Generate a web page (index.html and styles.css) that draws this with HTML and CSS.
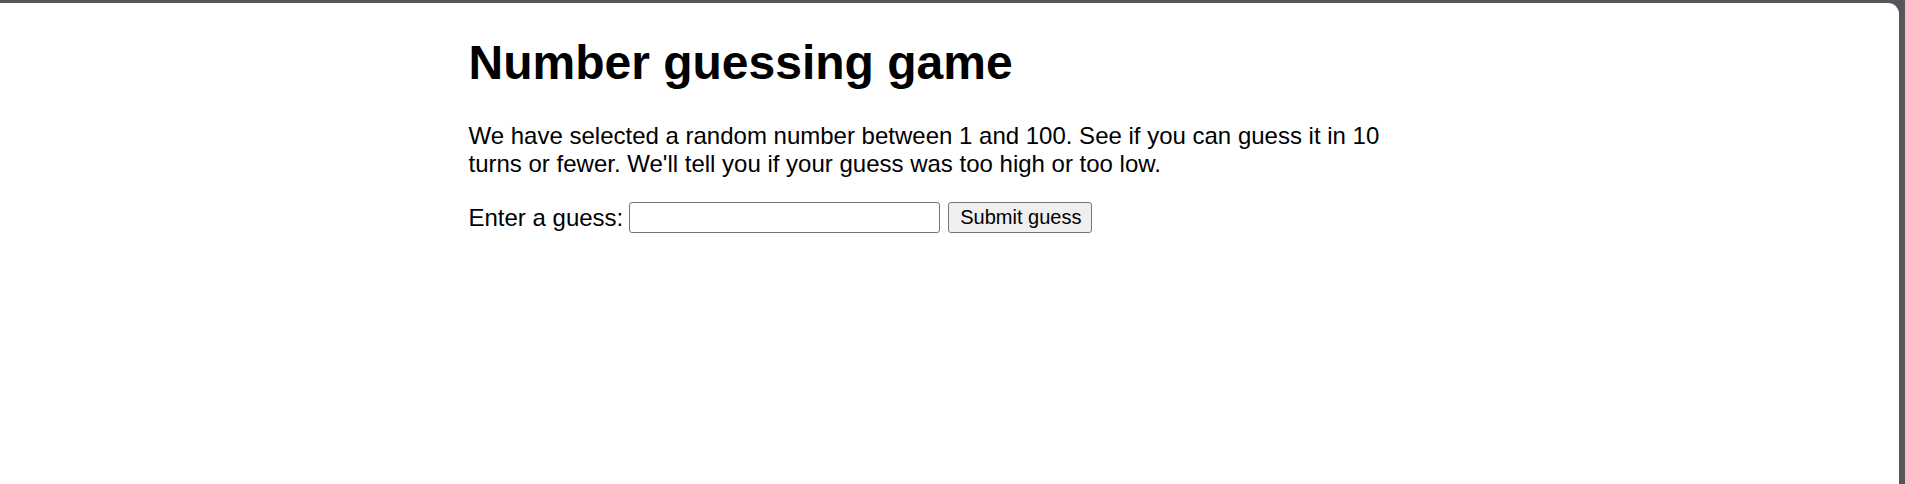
FILE: index.html
```html
<!DOCTYPE html>
<html lang="en">
<head>
<meta charset="utf-8">
<title>Number guessing game</title>
<link rel="stylesheet" href="styles.css">
</head>
<body>
  <main class="page">
    <h1 class="title">Number guessing game</h1>
    <p class="intro">We have selected a random number between 1 and 100. See if you can guess it in 10 turns or fewer. We'll tell you if your guess was too high or too low.</p>
    <div class="form">
      <label class="form-label" for="guessField">Enter a guess:</label>
      <input class="guess-field" type="number" id="guessField" min="1" max="100">
      <button class="guess-submit" type="button">Submit guess</button>
    </div>
  </main>
</body>
</html>
```

FILE: styles.css
```css
html {
  background: #55555c;
  padding: 3px 6px 0 0;
  height: 484px;
  box-sizing: border-box;
  overflow: hidden;
}

body {
  margin: 0;
  background: #ffffff;
  border-top-right-radius: 11px;
  min-height: 481px;
  display: flow-root;
  font-family: "Liberation Sans", Arial, sans-serif;
  color: #000;
}

.page {
  max-width: 962px;
  margin: 0 auto;
}

.title {
  font-size: 48px;
  font-weight: bold;
  margin: 32px 0;
  line-height: 55px;
}

.intro {
  font-size: 24px;
  line-height: 27.5px;
  margin: 0 0 24px;
}

.form {
  display: flex;
  align-items: center;
  font-size: 24px;
  margin-top: 25px;
}

.form-label {
  margin-right: 6px;
  line-height: 28px;
}

.guess-field {
  box-sizing: border-box;
  width: 311px;
  height: 31px;
  margin: 0 8px 0 0;
  padding: 1px 3px;
  border: 1px solid #767676;
  border-radius: 3px;
  background: #fff;
  font-family: "Liberation Sans", Arial, sans-serif;
  font-size: 20px;
  -moz-appearance: textfield;
  appearance: textfield;
}

.guess-field::-webkit-inner-spin-button,
.guess-field::-webkit-outer-spin-button {
  -webkit-appearance: none;
  margin: 0;
}

.guess-submit {
  box-sizing: border-box;
  width: 144px;
  height: 31px;
  margin: 0;
  padding: 0 11px;
  border: 1px solid #767676;
  border-radius: 3px;
  background: #efefef;
  color: #000;
  font-family: "Liberation Sans", Arial, sans-serif;
  font-size: 20px;
  white-space: nowrap;
}
```
